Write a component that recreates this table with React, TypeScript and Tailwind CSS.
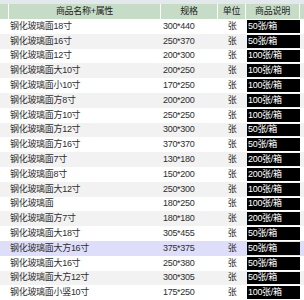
import React from 'react';

interface Product {
  name: string;
  size: string;
  unit: string;
  note: string;
}

const products: Product[] = [
  { name: '钢化玻璃面18寸', size: '300*440', unit: '张', note: '50张/箱' },
  { name: '钢化玻璃面16寸', size: '250*370', unit: '张', note: '50张/箱' },
  { name: '钢化玻璃面12寸', size: '200*300', unit: '张', note: '100张/箱' },
  { name: '钢化玻璃面大10寸', size: '200*250', unit: '张', note: '100张/箱' },
  { name: '钢化玻璃面小10寸', size: '170*250', unit: '张', note: '100张/箱' },
  { name: '钢化玻璃面方8寸', size: '200*200', unit: '张', note: '100张/箱' },
  { name: '钢化玻璃面方10寸', size: '250*250', unit: '张', note: '100张/箱' },
  { name: '钢化玻璃面方12寸', size: '300*300', unit: '张', note: '50张/箱' },
  { name: '钢化玻璃面方16寸', size: '370*370', unit: '张', note: '50张/箱' },
  { name: '钢化玻璃面7寸', size: '130*180', unit: '张', note: '200张/箱' },
  { name: '钢化玻璃面8寸', size: '150*200', unit: '张', note: '200张/箱' },
  { name: '钢化玻璃面大12寸', size: '250*300', unit: '张', note: '100张/箱' },
  { name: '钢化玻璃面', size: '180*250', unit: '张', note: '100张/箱' },
  { name: '钢化玻璃面方7寸', size: '180*180', unit: '张', note: '200张/箱' },
  { name: '钢化玻璃面大18寸', size: '305*455', unit: '张', note: '50张/箱' },
  { name: '钢化玻璃面大方16寸', size: '375*375', unit: '张', note: '50张/箱' },
  { name: '钢化玻璃面大16寸', size: '250*380', unit: '张', note: '50张/箱' },
  { name: '钢化玻璃面大方12寸', size: '300*305', unit: '张', note: '50张/箱' },
  { name: '钢化玻璃面小竖10寸', size: '175*250', unit: '张', note: '100张/箱' },
];

const font = "font-['Liberation_Sans','Noto_Sans_CJK_SC',sans-serif]";

export default function App() {
  return (
    <div className={`w-[304px] h-[300px] overflow-hidden bg-white text-[9px] leading-none text-[#2e2e2e] tracking-[-0.3px] ${font}`}>
      <div className="h-[4px] bg-[#e3e8ec]" />
      <div className="flex h-[15px] bg-[#c6dcc6] text-[#222]">
        <div className="w-[9px] border-r border-white" />
        <div className="w-[152px] border-r border-white flex items-center justify-center">商品名称+属性</div>
        <div className="w-[57px] border-r border-white flex items-center justify-center">规格</div>
        <div className="w-[28px] border-r border-white flex items-center justify-center">单位</div>
        <div className="w-[54px] border-r border-white flex items-center justify-center">商品说明</div>
        <div className="flex-1" />
      </div>
      {products.map((p, i) => {
        const highlight = i === 15;
        const bg = highlight ? 'bg-[#dedefa]' : i % 2 === 0 ? 'bg-white' : 'bg-[#f2f2f2]';
        return (
          <div key={i} className={`flex h-[14.8px] ${bg}`}>
            <div className="w-[10px]" />
            <div className="w-[151px] flex items-center">{p.name}</div>
            <div className="w-[57px] flex items-center pl-[2px]">{p.size}</div>
            <div className="w-[28px] flex items-center justify-center">{p.unit}</div>
            <div className="w-[54px] py-[1px] pl-[1px]">
              <div className="h-full bg-black text-white flex items-center pl-[1px]">{p.note}</div>
            </div>
            <div className="flex-1" />
          </div>
        );
      })}
    </div>
  );
}
